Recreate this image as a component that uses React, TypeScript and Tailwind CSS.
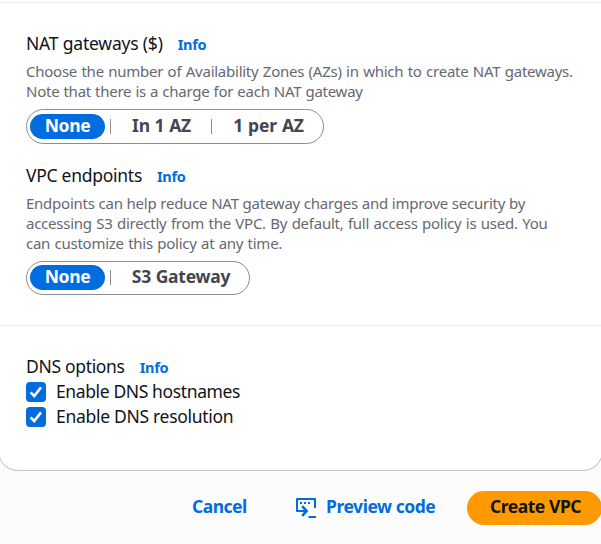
import React from "react";

function Heading({ text, className }: { text: string; className: string }) {
  return (
    <div className="flex h-[25px] items-center whitespace-nowrap">
      <span className={`text-[17.5px] text-[#0f141a] ${className}`}>{text}</span>
      <a className="ml-[15px] text-[14.5px] leading-5 font-bold tracking-[-0.3px] text-[#006ce0]">Info</a>
    </div>
  );
}

function Divider() {
  return <span className="h-[15px] w-px shrink-0 bg-[#8c8c94]" />;
}

function Check({ label, className }: { label: string; className: string }) {
  return (
    <label className="flex h-[25px] items-center gap-2.5 whitespace-nowrap">
      <span className="flex size-5 items-center justify-center rounded-[4px] bg-[#006ce0]">
        <svg width="20" height="20" viewBox="0 0 20 20" fill="none">
          <path d="M4.6 10.4 8.2 14 15 5.4" stroke="#fff" strokeWidth="2.5" />
        </svg>
      </span>
      <span className={`text-[17.5px] text-[#0f141a] ${className}`}>{label}</span>
    </label>
  );
}

function PreviewIcon() {
  return (
    <svg className="shrink-0" width="22" height="23" viewBox="0 0 22 23" fill="none" stroke="#006ce0" strokeWidth="2">
      <path d="M20 13V4H2V16H11" strokeLinejoin="round" />
      <path d="M7.2 11.2 11.6 16 7.2 20.8" strokeWidth="2.6" />
      <path d="M13.5 22H21" />
      <path d="M5 8H7M9 8H11M13 8H15" />
    </svg>
  );
}

export default function App() {
  return (
    <div className="h-[544px] w-[601px] overflow-hidden bg-[#fcfcfd] font-['Noto_Sans','Open_Sans',sans-serif]">
      <main className="-mx-[2px] h-[471px] rounded-b-[20px] border-x border-b border-[#c6c6cd] bg-white">
        <section className="h-[326px] border-b border-[#ebebf0]">
          <div className="h-[3px] border-b border-[#ebebf0]" />
          <div className="pt-7 pl-[27px]">
            <Heading text="NAT gateways ($)" className="tracking-[-0.2px]" />
            <div className="mt-[5px] text-[15px] leading-5 tracking-[-0.25px] whitespace-nowrap text-[#656871]">
              <p className="[word-spacing:0.76px]">Choose the number of Availability Zones (AZs) in which to create NAT gateways.</p>
              <p className="[word-spacing:0.45px]">Note that there is a charge for each NAT gateway</p>
            </div>
            <div className="mt-[8px] flex h-[35px] w-[298px] items-center rounded-full border border-[#8c8c94] pl-[3px] text-[17.5px] font-bold whitespace-nowrap text-[#424650]">
              <span className="mr-[5px] flex h-[25px] w-[75px] shrink-0 items-center justify-center rounded-full bg-[#006ce0] pb-[2px] tracking-[-0.4px] text-white">None</span>
              <Divider />
              <span className="flex w-[100px] shrink-0 justify-center pb-[2px] pl-px tracking-[-0.25px] [word-spacing:0.5px]">In 1 AZ</span>
              <Divider />
              <span className="flex w-[110px] shrink-0 justify-center pb-[2px] pl-[3px] tracking-[-0.2px] [word-spacing:0.7px]">1 per AZ</span>
            </div>
          </div>
          <div className="pt-[19px] pl-[27px]">
            <Heading text="VPC endpoints" className="tracking-[-0.27px]" />
            <div className="mt-[5px] text-[15px] leading-5 tracking-[-0.25px] whitespace-nowrap text-[#656871]">
              <p className="[word-spacing:0.25px]">Endpoints can help reduce NAT gateway charges and improve security by</p>
              <p className="[word-spacing:0.77px]">accessing S3 directly from the VPC. By default, full access policy is used. You</p>
              <p className="[word-spacing:0.7px]">can customize this policy at any time.</p>
            </div>
            <div className="mt-[8px] flex h-[34px] w-[224px] items-center rounded-full border border-[#8c8c94] pb-px pl-[3px] text-[17.5px] font-bold whitespace-nowrap text-[#424650]">
              <span className="mr-[5px] flex h-[25px] w-[75px] shrink-0 items-center justify-center rounded-full bg-[#006ce0] pb-[2px] tracking-[-0.4px] text-white">None</span>
              <Divider />
              <span className="flex w-[138px] shrink-0 justify-center pb-[2px] pl-[2px] tracking-[-0.25px] [word-spacing:0.5px]">S3 Gateway</span>
            </div>
          </div>
        </section>
        <section className="pt-[28px] pl-[27px]">
          <Heading text="DNS options" className="tracking-[-0.32px]" />
          <Check label="Enable DNS hostnames" className="tracking-[-0.38px]" />
          <Check label="Enable DNS resolution" className="tracking-[-0.3px]" />
        </section>
      </main>
      <footer className="flex h-[73px] items-center pb-[2px] pl-[192px] text-[17.5px] font-bold whitespace-nowrap text-[#006ce0]">
        <button className="w-[55px] shrink-0 text-left tracking-[-0.5px]">Cancel</button>
        <button className="ml-[48px] flex w-[141px] shrink-0 items-center gap-[9px] tracking-[-0.45px]">
          <PreviewIcon />
          <span>Preview code</span>
        </button>
        <button className="mt-[2px] ml-[31px] h-[34px] w-[135px] shrink-0 rounded-full bg-[#ff9900] pb-[2px] pl-[2px] tracking-[-0.45px] text-[#0f141a]">Create VPC</button>
      </footer>
    </div>
  );
}
